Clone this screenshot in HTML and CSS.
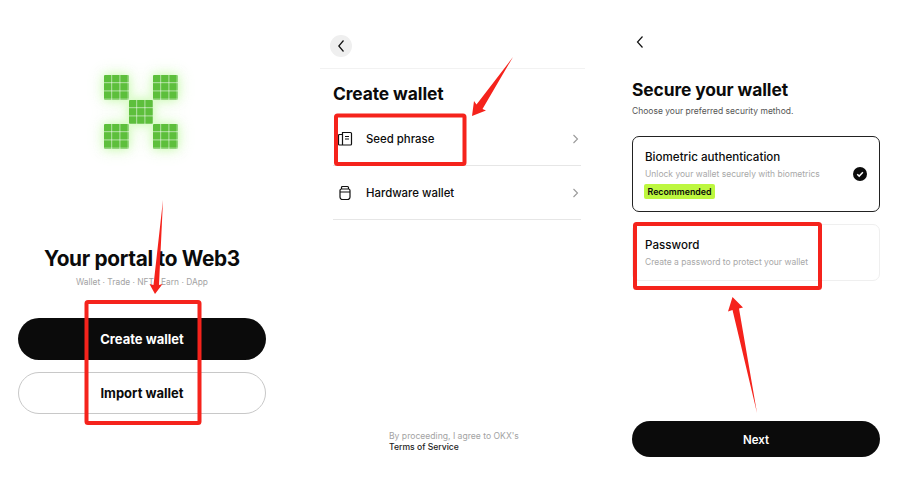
FILE: index.html
```html
<!DOCTYPE html>
<html lang="en">
<head>
<meta charset="utf-8">
<title>OKX Wallet setup</title>
<link rel="stylesheet" href="styles.css">
</head>
<body>
<main class="stage">
  <section class="panel panel-portal">
    <div class="logo">
      <span class="logo-cell on"></span><span class="logo-cell"></span><span class="logo-cell on"></span>
      <span class="logo-cell"></span><span class="logo-cell on"></span><span class="logo-cell"></span>
      <span class="logo-cell on"></span><span class="logo-cell"></span><span class="logo-cell on"></span>
    </div>
    <h1 class="portal-title">Your portal to Web3</h1>
    <p class="portal-sub">Wallet · Trade · NFT · Earn · DApp</p>
    <button class="pill pill-dark pill-first">Create wallet</button>
    <button class="pill pill-light">Import wallet</button>
  </section>

  <section class="panel panel-create">
    <header class="create-head">
      <span class="round-back">
        <svg width="10" height="14" viewBox="0 0 10 14"><path d="M7.500 1.500 2.800 7l4.700 5.500" class="ico"/></svg>
      </span>
    </header>
    <h2 class="heading create-title">Create wallet</h2>
    <div class="row">
      <svg class="row-icon" width="16" height="16" viewBox="0 0 16 16">
        <path class="ico" d="M5.500 1.500h8a1 1 0 0 1 1 1V13a1 1 0 0 1-1 1h-8zM5.500 3.500H2.500a1 1 0 0 0-1 1V13a1 1 0 0 0 1 1h3M8 5.500h4M8 8h4"/>
      </svg>
      <span class="row-label">Seed phrase</span>
      <svg class="row-chev" width="7" height="10" viewBox="0 0 7 10"><path d="M1.500 1 5.500 5l-4 4"/></svg>
    </div>
    <div class="row">
      <svg class="row-icon" width="16" height="16" viewBox="0 0 16 16">
        <path class="ico" d="M4.500 4V2.500a1 1 0 0 1 1-1h5a1 1 0 0 1 1 1V4M4.500 4h7a1.500 1.500 0 0 1 1.500 1.500V12a2.500 2.500 0 0 1-2.500 2.500h-5A2.500 2.500 0 0 1 3 12V5.500A1.500 1.500 0 0 1 4.500 4ZM3 7h10"/>
      </svg>
      <span class="row-label">Hardware wallet</span>
      <svg class="row-chev" width="7" height="10" viewBox="0 0 7 10"><path d="M1.500 1 5.500 5l-4 4"/></svg>
    </div>
    <p class="terms">By proceeding, I agree to OKX's<br><span class="terms-link">Terms of Service</span></p>
  </section>

  <section class="panel panel-secure">
    <div class="plain-back">
      <svg width="10" height="14" viewBox="0 0 10 14"><path d="M7.500 1.500 2.500 7l5 5.500" class="ico"/></svg>
    </div>
    <h2 class="heading secure-title">Secure your wallet</h2>
    <p class="secure-sub">Choose your preferred security method.</p>
    <div class="card card-active">
      <div>
        <div class="card-title">Biometric authentication</div>
        <div class="card-desc">Unlock your wallet securely with biometrics</div>
        <span class="badge">Recommended</span>
      </div>
      <svg width="14" height="14" viewBox="0 0 14 14"><circle cx="7" cy="7" r="7" fill="#0b0b0b"/><path d="M4.200 7.200 6.200 9.100 9.900 5.200" fill="none" stroke="#fff" stroke-width="1.500"/></svg>
    </div>
    <div class="card card-idle">
      <div>
        <div class="card-title">Password</div>
        <div class="card-desc">Create a password to protect your wallet</div>
      </div>
    </div>
    <button class="pill pill-dark pill-next"><span class="next-label">Next</span></button>
  </section>
</main>

<svg class="marks" width="900" height="481" viewBox="0 0 900 481">
  <rect class="mark-box" x="86.500" y="302" width="113" height="121" rx="1.500"/>
  <rect class="mark-box" x="336" y="115.500" width="128.500" height="48.500" rx="1.500"/>
  <rect class="mark-box" x="635" y="224" width="185" height="64" rx="1.500"/>
  <polygon class="mark-arrow" points="163,200 159,285 162.500,284 155,294 149.500,284 153.500,285"/>
  <polygon class="mark-arrow" points="513,57 482.500,109 486,110.500 472,116 474,101 476.500,104.500"/>
  <polygon class="mark-arrow" points="757,413 739,308.500 743,307.500 732.500,297 728,311.500 732.500,310"/>
</svg>
</body>
</html>
```

FILE: styles.css
```css
* { box-sizing: border-box; }

html, body {
  margin: 0;
  width: 900px;
  height: 481px;
  overflow: hidden;
  background: #fff;
}

body {
  position: relative;
  font-family: Inter, "Liberation Sans", sans-serif;
  color: #0b0b0b;
}

.stage {
  display: flex;
  height: 481px;
  padding-left: 18px;
}

.panel {
  display: flex;
  flex-direction: column;
  flex: 0 0 248px;
  height: 481px;
}

h1, h2, p { margin: 0; }

/* Panel 1 */
.panel-portal { padding-top: 75px; }

.logo {
  display: grid;
  grid-template-columns: repeat(3, 24.7px);
  grid-auto-rows: 24.7px;
  margin-left: 86px;
  width: 74.100px;
  filter: drop-shadow(0 0 5px rgba(170, 245, 130, .5)) drop-shadow(0 0 8px rgba(190, 250, 160, .45));
}

.logo-cell.on {
  background-color: #5dbf3c;
  background-image:
    linear-gradient(to right, transparent 7.200px, rgba(255, 255, 255, .6) 7.200px),
    linear-gradient(to bottom, transparent 7.200px, rgba(255, 255, 255, .6) 7.200px);
  background-size: 8.200px 8.200px;
  border-radius: 1px;
}

.portal-title {
  margin-top: 96px;
  font-size: 20.800px;
  line-height: 28px;
  font-weight: 700;
  letter-spacing: -.3px;
  text-align: center;
}

.portal-sub {
  margin-top: 3px;
  font-size: 8.400px;
  line-height: 12px;
  color: #a3a3a3;
  text-align: center;
}

.pill {
  display: block;
  width: 248px;
  border-radius: 22px;
  font-family: inherit;
  font-size: 13px;
  font-weight: 700;
  padding: 0;
}

.pill-dark { background: #0b0b0b; color: #fff; border: 0; }
.pill-light { background: #fff; color: #0b0b0b; border: 1px solid #c8c8c8; height: 42px; margin-top: 12px; }
.pill-first { margin-top: 30px; height: 42px; }

/* Panel 2 */
.panel-create {
  margin-left: 67px;
  padding-top: 35px;
  padding-bottom: 28px;
}

.create-head {
  margin: 0 -4px 0 -13px;
  padding: 0 0 11px 10px;
  border-bottom: 1px solid #f2f2f2;
}

.round-back {
  display: flex;
  align-items: center;
  justify-content: center;
  width: 22px;
  height: 22px;
  border-radius: 50%;
  background: #efefef;
}

.ico {
  fill: none;
  stroke: #111;
  stroke-width: 1.200;
}

.heading {
  font-size: 17.400px;
  line-height: 24px;
  font-weight: 700;
  letter-spacing: -.1px;
}

.create-title { margin-top: 13px; }

.row {
  display: flex;
  align-items: center;
  height: 54px;
  padding: 0 2px 0 4px;
  border-bottom: 1px solid #e6e6e6;
}

.create-title + .row { margin-top: 6px; }

.row-icon { flex: none; }

.row-label {
  flex: 1;
  margin-left: 13px;
  font-size: 11.400px;
  font-weight: 500;
}

.row-chev {
  flex: none;
  fill: none;
  stroke: #9a9a9a;
  stroke-width: 1.100;
}

.terms {
  margin-top: auto;
  margin-left: 56px;
  font-size: 8.600px;
  line-height: 11px;
  color: #a3a3a3;
}

.terms-link { color: #222; font-weight: 500; }

/* Panel 3 */
.panel-secure {
  margin-left: 51px;
  padding-top: 35px;
  padding-bottom: 24px;
}

.plain-back {
  height: 14px;
  margin-left: 3px;
}

.plain-back svg { display: block; }

.secure-title { margin-top: 29px; }

.secure-sub {
  margin-top: 3px;
  font-size: 8.500px;
  line-height: 12px;
  color: #555;
}

.card {
  display: flex;
  align-items: center;
  justify-content: space-between;
  padding: 0 12px;
  border-radius: 7px;
}

.card-active { height: 76px; margin-top: 19px; border: 1px solid #222; }
.card-idle { height: 57px; margin-top: 12px; border: 1px solid #efefef; }

.card-title {
  font-size: 11.600px;
  line-height: 16px;
  font-weight: 500;
}

.card-desc {
  margin-top: 3px;
  font-size: 8.500px;
  line-height: 12px;
  color: #a8a8a8;
}

.badge {
  display: block;
  width: 71px;
  height: 15px;
  margin: 4px 0 0 -1px;
  border-radius: 2px;
  background: #bdf73f;
  font-size: 8.800px;
  line-height: 15px;
  font-weight: 600;
  text-align: center;
}

.pill-next {
  margin-top: auto;
  height: 36px;
  border-radius: 18px;
  font-size: 11.500px;
  font-weight: 600;
}

.next-label {
  display: block;
  padding-top: 1px;
}

/* Red annotations */
.marks {
  position: absolute;
  left: 0;
  top: 0;
  pointer-events: none;
}

.mark-box {
  fill: none;
  stroke: #f5231c;
  stroke-width: 4;
}

.mark-arrow { fill: #f5231c; }
```
